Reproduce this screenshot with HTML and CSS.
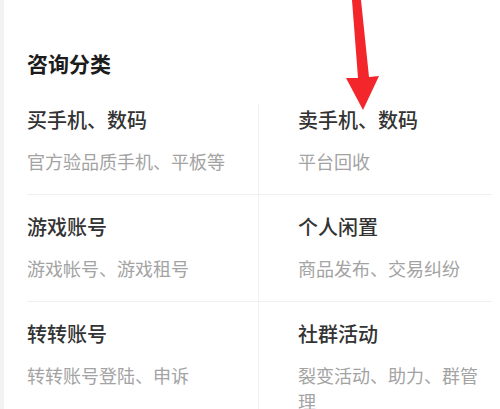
FILE: index.html
```html
<!DOCTYPE html>
<html lang="zh-CN">
<head>
<meta charset="utf-8">
<title>咨询分类</title>
<link rel="stylesheet" href="styles.css">
</head>
<body>
<div class="page">
  <h2 class="heading">咨询分类</h2>
  <div class="grid">
    <div class="cell left">
      <div class="name">买手机、数码</div>
      <div class="desc">官方验品质手机、平板等</div>
    </div>
    <div class="cell right first">
      <div class="name">卖手机、数码</div>
      <div class="desc">平台回收</div>
    </div>
    <div class="cell left">
      <div class="name">游戏账号</div>
      <div class="desc">游戏帐号、游戏租号</div>
    </div>
    <div class="cell right">
      <div class="name">个人闲置</div>
      <div class="desc">商品发布、交易纠纷</div>
    </div>
    <div class="cell left last">
      <div class="name">转转账号</div>
      <div class="desc">转转账号登陆、申诉</div>
    </div>
    <div class="cell right last">
      <div class="name">社群活动</div>
      <div class="desc">裂变活动、助力、群管理</div>
    </div>
  </div>
  <svg class="arrow" width="500" height="120" viewBox="0 0 500 120" aria-hidden="true">
    <polygon points="352,0 361,0 369,77 379,76 363,110 346,78 358,78" fill="#f2262b"/>
  </svg>
</div>
</body>
</html>
```

FILE: styles.css
```css
html, body {
  margin: 0;
  padding: 0;
  background: #ffffff;
}

body {
  width: 500px;
  height: 409px;
  overflow: hidden;
  font-family: "Noto Sans CJK SC", "Noto Sans", sans-serif;
}

.page {
  position: relative;
  height: 409px;
  box-sizing: border-box;
  padding: 48px 8px 0 27px;
  border-left: 4px solid #f3f3f3;
}

.heading {
  margin: 0 0 10px -4px;
  font-size: 21px;
  line-height: 30px;
  font-weight: 700;
  color: #1c1c1c;
}

.grid {
  display: grid;
  grid-template-columns: 231px 1fr;
  margin-left: -4px;
}

.cell {
  padding: 18px 0 20px 0;
  border-bottom: 1px solid #efefef;
}

.cell.right {
  padding-left: 39px;
  border-left: 1px solid #f1f1f1;
}

.cell.right.first {
  border-left: none;
  padding-left: 40px;
  background: linear-gradient(#f1f1f1, #f1f1f1) no-repeat left 15px / 1px calc(100% - 15px);
}

.cell.last {
  border-bottom: none;
}

.name {
  font-size: 20px;
  line-height: 28px;
  font-weight: 500;
  color: #333333;
}

.desc {
  margin-top: 14px;
  font-size: 18px;
  line-height: 26px;
  color: #a3a3a3;
}

.arrow {
  position: absolute;
  left: -4px;
  top: 0;
}
```
